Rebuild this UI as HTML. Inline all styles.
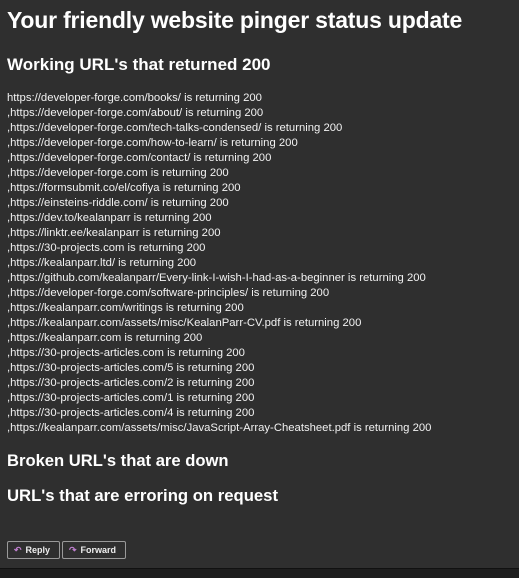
<!DOCTYPE html>
<html><head><style>
html,body{margin:0;padding:0;}
body{width:519px;height:577px;background:#2f2f2f;color:#fff;font-family:"Liberation Sans",sans-serif;position:relative;overflow:hidden;}
.t{position:absolute;left:7px;white-space:nowrap;font-weight:bold;}
#h1{top:7px;font-size:23px;letter-spacing:-0.2px;}
#h2{top:55px;font-size:17px;}
#h3{top:451px;font-size:16.6px;}
#h4{top:486px;font-size:16.7px;}
#list{position:absolute;left:7px;top:91px;font-size:11.3px;line-height:15px;white-space:nowrap;color:#f2f2f2;}
.btn{position:absolute;top:541px;height:16px;border:1px solid #9a9a9a;border-radius:2px;font-size:9px;font-weight:bold;line-height:16px;color:#eee;}
.btn span{color:#c080d0;margin:0 4px 0 6px;}
#bot{position:absolute;left:0;top:568px;width:519px;height:9px;background:#1e1e1e;border-top:1px solid #111;}
</style></head><body>
<div class="t" id="h1">Your friendly website pinger status update</div>
<div class="t" id="h2">Working URL's that returned 200</div>
<div id="list">https://developer-forge.com/books/ is returning 200<br>
,https://developer-forge.com/about/ is returning 200<br>
,https://developer-forge.com/tech-talks-condensed/ is returning 200<br>
,https://developer-forge.com/how-to-learn/ is returning 200<br>
,https://developer-forge.com/contact/ is returning 200<br>
,https://developer-forge.com is returning 200<br>
,https://formsubmit.co/el/cofiya is returning 200<br>
,https://einsteins-riddle.com/ is returning 200<br>
,https://dev.to/kealanparr is returning 200<br>
,https://linktr.ee/kealanparr is returning 200<br>
,https://30-projects.com is returning 200<br>
,https://kealanparr.ltd/ is returning 200<br>
,https://github.com/kealanparr/Every-link-I-wish-I-had-as-a-beginner is returning 200<br>
,https://developer-forge.com/software-principles/ is returning 200<br>
,https://kealanparr.com/writings is returning 200<br>
,https://kealanparr.com/assets/misc/KealanParr-CV.pdf is returning 200<br>
,https://kealanparr.com is returning 200<br>
,https://30-projects-articles.com is returning 200<br>
,https://30-projects-articles.com/5 is returning 200<br>
,https://30-projects-articles.com/2 is returning 200<br>
,https://30-projects-articles.com/1 is returning 200<br>
,https://30-projects-articles.com/4 is returning 200<br>
,https://kealanparr.com/assets/misc/JavaScript-Array-Cheatsheet.pdf is returning 200</div>
<div class="t" id="h3">Broken URL's that are down</div>
<div class="t" id="h4">URL's that are erroring on request</div>
<div class="btn" style="left:7px;width:51px;"><span>↶</span>Reply</div>
<div class="btn" style="left:62px;width:62px;"><span>↷</span>Forward</div>
<div id="bot"></div>
</body></html>
